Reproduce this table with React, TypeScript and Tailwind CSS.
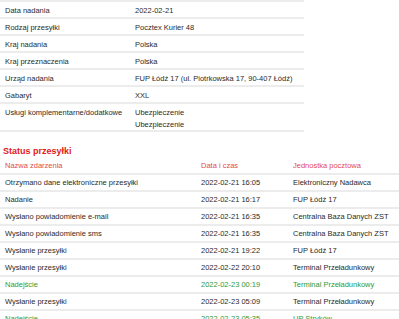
import React from "react";

const info: [string, string[]][] = [
  ["Data nadania", ["2022-02-21"]],
  ["Rodzaj przesyłki", ["Pocztex Kurier 48"]],
  ["Kraj nadania", ["Polska"]],
  ["Kraj przeznaczenia", ["Polska"]],
  ["Urząd nadania", ["FUP Łódź 17 (ul. Piotrkowska 17, 90-407 Łódź)"]],
  ["Gabaryt", ["XXL"]],
  ["Usługi komplementarne/dodatkowe", ["Ubezpieczenie", "Ubezpieczenie"]],
];

const events: { n: string; d: string; u: string; g?: boolean }[] = [
  { n: "Otrzymano dane elektroniczne przesyłki", d: "2022-02-21 16:05", u: "Elektroniczny Nadawca" },
  { n: "Nadanie", d: "2022-02-21 16:17", u: "FUP Łódź 17" },
  { n: "Wysłano powiadomienie e-mail", d: "2022-02-21 16:35", u: "Centralna Baza Danych ZST" },
  { n: "Wysłano powiadomienie sms", d: "2022-02-21 16:35", u: "Centralna Baza Danych ZST" },
  { n: "Wysłanie przesyłki", d: "2022-02-21 19:22", u: "FUP Łódź 17" },
  { n: "Wysłanie przesyłki", d: "2022-02-22 20:10", u: "Terminal Przeładunkowy" },
  { n: "Nadejście", d: "2022-02-23 00:19", u: "Terminal Przeładunkowy", g: true },
  { n: "Wysłanie przesyłki", d: "2022-02-23 05:09", u: "Terminal Przeładunkowy" },
  { n: "Nadejście", d: "2022-02-23 05:35", u: "UP Stryków", g: true },
];

export default function App() {
  return (
    <div
      className="w-[399px] h-[319px] overflow-hidden bg-white text-[#2a2a2a] text-[7.5px] leading-[12px]"
      style={{ fontFamily: '"Liberation Sans", Arial, sans-serif' }}
    >
      <div className="w-[304px] border-t-2 border-[#ececec]">
        {info.map(([k, v], i) => (
          <div
            key={i}
            className={`flex border-b-2 border-[#ececec] ${v.length > 1 ? "h-[28px]" : "h-[17px]"}`}
          >
            <div className="w-[135px] pl-[5px] pt-[2.5px]">{k}</div>
            <div className="flex-1 pt-[2.5px]">
              {v.map((t, j) => (
                <div key={j}>{t}</div>
              ))}
            </div>
          </div>
        ))}
      </div>
      <div className="mt-[13px] pl-[3px] text-[9px] leading-[12px] font-bold text-[#e01818]">Status przesyłki</div>
      <div>
        <div className="flex h-[18px] pt-[3px] border-b-2 border-[#ececec] text-[#e2494f]">
          <div className="w-[201px] pl-[5px]">Nazwa zdarzenia</div>
          <div className="w-[92px]">Data i czas</div>
          <div className="flex-1">Jednostka pocztowa</div>
        </div>
        {events.map((e, i) => (
          <div
            key={i}
            className={`flex items-center h-[17px] border-b-2 border-[#ececec] ${e.g ? "text-[#2e9a35]" : ""}`}
          >
            <div className="w-[201px] pl-[5px]">{e.n}</div>
            <div className="w-[92px]">{e.d}</div>
            <div className="flex-1">{e.u}</div>
          </div>
        ))}
      </div>
    </div>
  );
}
